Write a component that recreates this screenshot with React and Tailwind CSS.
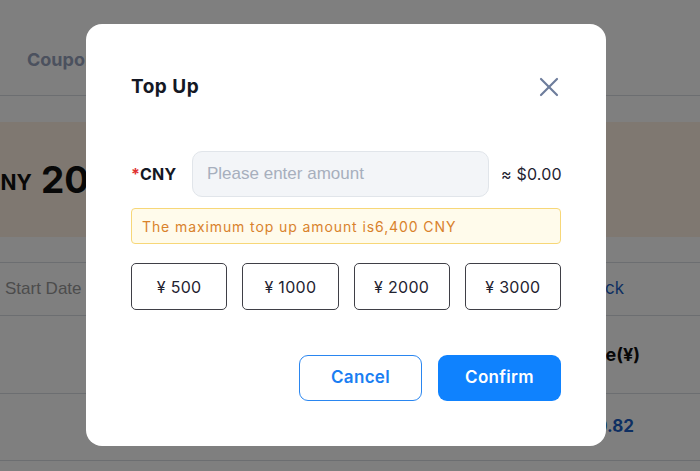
import { X } from "lucide-react";

const amounts = [500, 1000, 2000, 3000];

const poppins = { fontFamily: "Inter, 'Noto Sans', sans-serif" };

const Page = () => (
  <div className="w-[700px] h-[471px] bg-white overflow-hidden font-['Inter',sans-serif]">
    <div className="h-[96px] border-b border-[#d9dde3] flex items-center pl-[27px] pt-[24px]">
      <span className="text-[18px] font-bold text-[#97a2bd]">Coupons</span>
    </div>
    <div className="mt-[26px] h-[115px] bg-[#fff1e2] flex items-center -ml-[15px]">
      <span className="text-[21px] font-bold text-[#111] mt-[6px]">CNY</span>
      <span className="ml-[9px] text-[37px] font-bold text-[#111]">2000.00</span>
    </div>
    <div className="mt-[25px] h-[54px] flex items-center justify-between border-y border-[#d9dde3]">
      <span className="pl-[5px] text-[17px] text-[#999] font-['Liberation_Sans',sans-serif]">Start Date</span>
      <span className="pr-[76px] text-[17px] text-[#1d5fc4]">Back</span>
    </div>
    <div className="h-[78px] flex items-center justify-end pr-[60px] border-b border-[#d9dde3]">
      <span className="text-[18px] font-bold text-[#111]">Balance(¥)</span>
    </div>
    <div className="h-[67px] flex items-center justify-end pr-[66px] border-b border-[#d9dde3]">
      <span className="text-[17px] font-bold text-[#1d5fc4]">1290.82</span>
    </div>
  </div>
);

export default function App() {
  return (
    <div className="relative w-[700px] h-[471px] overflow-hidden">
      <Page />
      <div className="absolute inset-0 bg-black/50 flex items-start pl-[86px] pt-[24px]">
        <div
          className="w-[520px] h-[422px] bg-white rounded-[16px] px-[45px] pt-[49px]"
          style={poppins}
        >
          <div className="flex items-center justify-between h-[28px]">
            <h2 className="text-[19px] font-bold text-[#141824] tracking-[0.5px]">Top Up</h2>
            <X className="w-[32px] h-[32px] -mr-[4px] text-[#6e7d9c]" strokeWidth={1.6} />
          </div>

          <div className="mt-[50px] flex items-center h-[46px]">
            <label className="w-[61px] shrink-0 text-[16px] font-bold text-[#141824] tracking-[0.3px]">
              <span className="text-[#e03131]">*</span>CNY
            </label>
            <input
              placeholder="Please enter amount"
              className="w-[297px] shrink-0 h-[46px] rounded-[10px] border border-[#e1e5ea] bg-[#f3f5f8] px-[14px] text-[17px] outline-none placeholder:text-[#a7afbd] font-['Liberation_Sans',sans-serif]"
            />
            <span className="ml-[12px] whitespace-nowrap text-[16px] text-[#1f2330] tracking-[0.2px]">≈ $0.00</span>
          </div>

          <div className="mt-[11px] h-[36px] flex items-center px-[10px] rounded-[4px] border border-[#f7d778] bg-[#fffbeb] text-[14px] text-[#d9822b] tracking-[0.9px]">
            The maximum top up amount is6,400 CNY
          </div>

          <div className="mt-[19px] grid grid-cols-4 gap-[15px]">
            {amounts.map((a) => (
              <button
                key={a}
                className="h-[47px] rounded-[5px] border border-[#3f3f46] bg-white text-[16px] text-[#1f2330] tracking-[0.3px]"
              >
                ¥ {a}
              </button>
            ))}
          </div>

          <div className="mt-[45px] flex justify-end gap-[16px]">
            <button className="w-[123px] h-[46px] rounded-[9px] border border-[#2a86f0] text-[#1a7ef2] text-[17px] font-semibold bg-white tracking-[0.3px]">
              Cancel
            </button>
            <button className="w-[123px] h-[46px] rounded-[9px] bg-[#0f82fe] text-white text-[17px] font-semibold tracking-[0.3px]">
              Confirm
            </button>
          </div>
        </div>
      </div>
    </div>
  );
}
